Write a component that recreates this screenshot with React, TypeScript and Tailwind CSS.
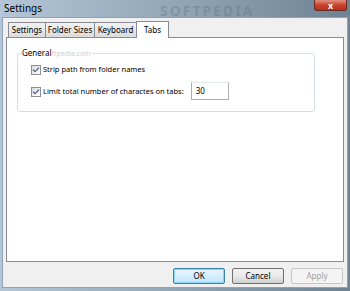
import { Check } from 'lucide-react';

const font = { fontFamily: '"Noto Sans", "Open Sans", sans-serif' };

function Tab({ label, width, active }: { label: string; width: string; active?: boolean }) {
  if (active) {
    return (
      <div
        className={
          'relative z-10 -mb-px flex h-[17px] items-center justify-center border border-b-0 border-[#898c95] bg-white text-[8px] text-black ' +
          width
        }
      >
        {label}
      </div>
    );
  }
  return (
    <div
      className={
        '-mr-px flex h-[15px] items-center justify-center border border-b-0 border-[#898c95] bg-gradient-to-b from-[#f2f2f2] to-[#dcdcdc] text-[8px] leading-none text-black ' +
        width
      }
    >
      {label}
    </div>
  );
}

function CheckBox() {
  return (
    <div className="flex h-[10px] w-[10px] shrink-0 items-center justify-center border border-[#8e8f8f] bg-gradient-to-br from-[#dcdcdc] to-white">
      <Check size={8} strokeWidth={3.5} className="text-[#4a5f97]" />
    </div>
  );
}

function Button({ label, primary, disabled }: { label: string; primary?: boolean; disabled?: boolean }) {
  return (
    <div
      className={
        'flex h-[16px] w-[52px] items-center justify-center rounded-[2px] border text-[8px] leading-none ' +
        (disabled
          ? 'border-[#c7c7c7] bg-[#f4f4f4] text-[#a0a0a0]'
          : primary
            ? 'border-[#3c7fb1] bg-gradient-to-b from-[#eaf6fd] to-[#bee6fd] text-black shadow-[inset_0_0_0_1px_#8fd5f7]'
            : 'border-[#707070] bg-gradient-to-b from-[#f2f2f2] via-[#ebebeb] to-[#cfcfcf] text-black')
      }
    >
      {label}
    </div>
  );
}

export default function App() {
  return (
    <div
      style={font}
      className="flex h-[291px] w-[350px] flex-col bg-gradient-to-r from-[#b4c6d8] via-[#92a6b8] to-[#6f8294]"
    >
      <div className="relative flex h-[17px] shrink-0 items-start">
        <span className="pl-[4px] pt-[2px] text-[10px] leading-[12px] text-black">Settings</span>
        <span className="absolute left-[160px] top-[0px] text-[14px] font-bold tracking-[2px] text-[#5f7080]/35">
          SOFTPEDIA
        </span>
        <div className="absolute right-[3px] top-0 flex h-[11px] w-[33px] items-center justify-center rounded-b-[3px] border border-t-0 border-[#6d2a22] bg-gradient-to-b from-[#e0917f] via-[#c9432c] to-[#b8301a]">
          <span className="text-[9px] font-bold leading-none text-white">x</span>
        </div>
      </div>

      <div className="mx-[2px] mb-[3px] flex flex-1 flex-col border border-[#8ea3b6] bg-[#f0f0f0] px-[3px]">
        <div className="flex items-end pl-[2px] pt-[3px]">
          <Tab label="Settings" width="w-[38px]" />
          <Tab label="Folder Sizes" width="w-[50px]" />
          <Tab label="Keyboard" width="w-[43px]" />
          <Tab label="Tabs" width="w-[33px]" active />
        </div>
        <div className="h-[225px] border border-[#898c95] bg-white px-[10px] pt-[15px]">
          <div className="relative h-[59px] w-[298px] rounded-[3px] border border-[#d5dfe5] pl-[13px] pt-[10px] text-[7.5px] text-black">
            <span className="absolute left-[4px] top-[-6px] bg-white pr-[1px] text-[8px] leading-[10px]">
              General<span className="text-[7px] text-[#cfcfcf]">ftpedia.com</span>
            </span>
            <div className="flex h-[12px] items-center gap-[2px]">
              <CheckBox />
              <span className="leading-none">Strip path from folder names</span>
            </div>
            <div className="mt-[6px] flex h-[20px] items-center gap-[2px]">
              <CheckBox />
              <span className="leading-none">Limit total number of charactes on tabs:</span>
              <div className="mb-[3px] ml-[5px] flex h-[18px] w-[38px] items-center border border-[#abadb3] border-t-[#e3e9ef] pl-[4px] text-[8px]">
                30
              </div>
            </div>
          </div>
        </div>
        <div className="flex justify-end gap-[7px] pr-[1px] pt-[6px]">
          <Button label="OK" primary />
          <Button label="Cancel" />
          <Button label="Apply" disabled />
        </div>
      </div>
    </div>
  );
}
